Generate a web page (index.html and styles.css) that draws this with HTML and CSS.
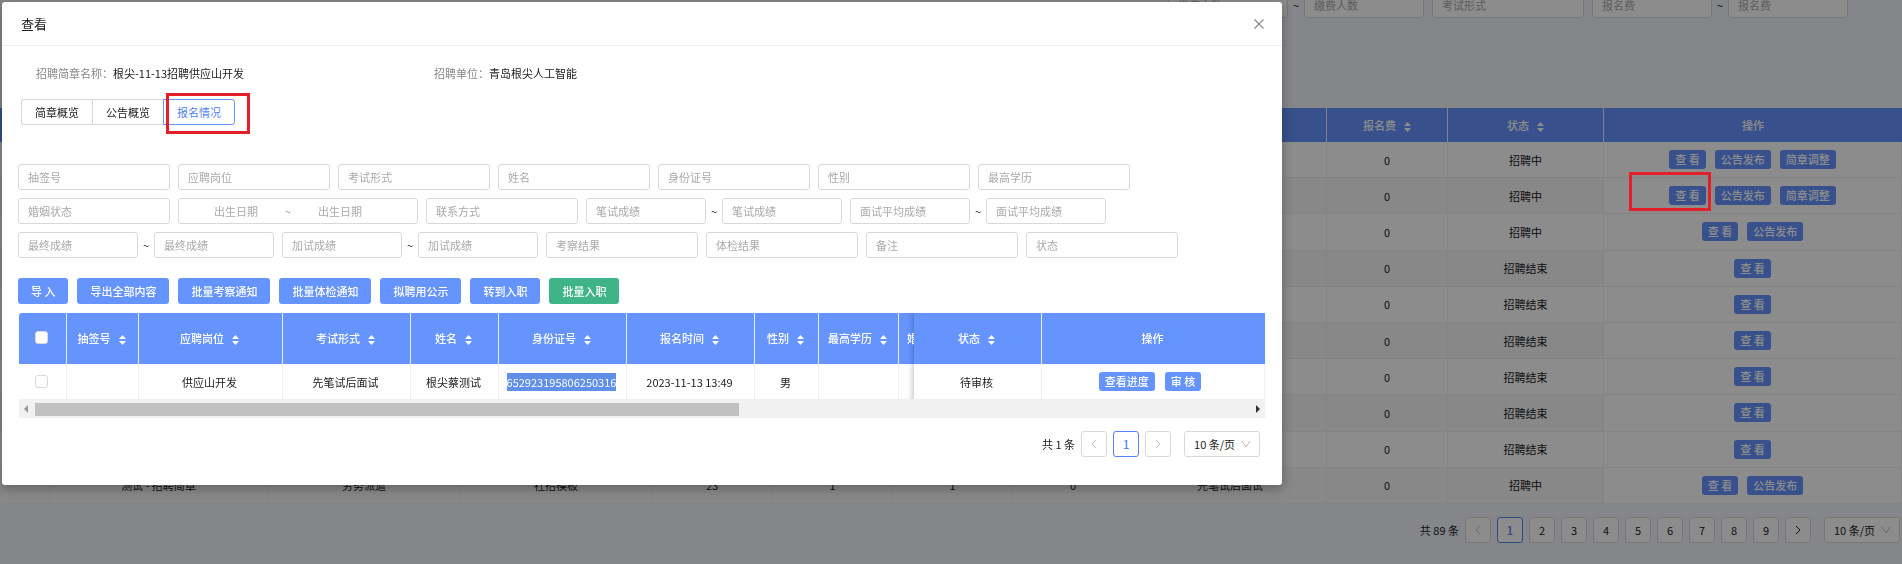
FILE: index.html
```html
<!DOCTYPE html>
<html lang="zh-CN">
<head>
<meta charset="utf-8">
<title>查看</title>
<link rel="stylesheet" href="styles.css">
</head>
<body>
<svg class="defs" aria-hidden="true">
  <symbol id="sort" viewBox="0 0 7 10"><path d="M3.5 0 7 4H0zM3.5 10 0 6h7z" fill="currentColor"/></symbol>
  <symbol id="prev" viewBox="0 0 10 10"><path d="M7 1 3 5l4 4" fill="none" stroke="currentColor"/></symbol>
  <symbol id="next" viewBox="0 0 10 10"><path d="m3 1 4 4-4 4" fill="none" stroke="currentColor"/></symbol>
  <symbol id="down" viewBox="0 0 10 10"><path d="m1 2 4 6 4-6" fill="none" stroke="currentColor"/></symbol>
</svg>

<main class="page">
  <div class="page-filters">
    <input class="field short" aria-label="缴费人数下限" placeholder="缴费人数"><span class="tilde">~</span><input class="field short" aria-label="缴费人数上限" placeholder="缴费人数">
    <input class="field after" aria-label="考试形式" placeholder="考试形式">
    <input class="field short after" aria-label="报名费下限" placeholder="报名费"><span class="tilde">~</span><input class="field short" aria-label="报名费上限" placeholder="报名费">
  </div>

  <table class="grid page-grid">
    <colgroup><col class="p1"><col class="p2"><col class="p3"><col class="p4"><col class="p5"><col class="p6"><col class="p6"><col class="p5"><col class="p3"><col class="p5"><col class="p7"><col></colgroup>
    <thead>
      <tr><th></th><th></th><th></th><th></th><th></th><th></th><th></th><th></th><th></th>
        <th>报名费<svg class="sort"><use href="#sort"/></svg></th><th>状态<svg class="sort"><use href="#sort"/></svg></th><th>操作</th></tr>
    </thead>
    <tbody>
      <tr><td></td><td></td><td></td><td></td><td></td><td></td><td></td><td></td><td></td><td>0</td><td>招聘中</td><td><div class="acts"><button class="mini">查 看</button><button class="mini">公告发布</button><button class="mini">简章调整</button></div></td></tr>
      <tr><td></td><td></td><td></td><td></td><td></td><td></td><td></td><td></td><td></td><td>0</td><td>招聘中</td><td><div class="acts"><span class="marked"><button class="mini">查 看</button><span class="mark mark-view"></span></span><button class="mini">公告发布</button><button class="mini">简章调整</button></div></td></tr>
      <tr><td></td><td></td><td></td><td></td><td></td><td></td><td></td><td></td><td></td><td>0</td><td>招聘中</td><td><div class="acts"><button class="mini">查 看</button><button class="mini">公告发布</button></div></td></tr>
      <tr><td></td><td></td><td></td><td></td><td></td><td></td><td></td><td></td><td></td><td>0</td><td>招聘结束</td><td><div class="acts"><button class="mini">查 看</button></div></td></tr>
      <tr><td></td><td></td><td></td><td></td><td></td><td></td><td></td><td></td><td></td><td>0</td><td>招聘结束</td><td><div class="acts"><button class="mini">查 看</button></div></td></tr>
      <tr><td></td><td></td><td></td><td></td><td></td><td></td><td></td><td></td><td></td><td>0</td><td>招聘结束</td><td><div class="acts"><button class="mini">查 看</button></div></td></tr>
      <tr><td></td><td></td><td></td><td></td><td></td><td></td><td></td><td></td><td></td><td>0</td><td>招聘结束</td><td><div class="acts"><button class="mini">查 看</button></div></td></tr>
      <tr><td></td><td></td><td></td><td></td><td></td><td></td><td></td><td></td><td></td><td>0</td><td>招聘结束</td><td><div class="acts"><button class="mini">查 看</button></div></td></tr>
      <tr><td></td><td></td><td></td><td></td><td></td><td></td><td></td><td></td><td></td><td>0</td><td>招聘结束</td><td><div class="acts"><button class="mini">查 看</button></div></td></tr>
      <tr><td></td><td>测试 - 招聘简章</td><td>劳务派遣</td><td>社招模板</td><td>23</td><td>1</td><td>1</td><td>0</td><td>先笔试后面试</td><td>0</td><td>招聘中</td><td><div class="acts"><button class="mini">查 看</button><button class="mini">公告发布</button></div></td></tr>
    </tbody>
  </table>

  <nav class="pager page-pager" aria-label="列表分页">
    <span>共 89 条</span>
    <button class="pg off" aria-label="上一页"><svg class="ico"><use href="#prev"/></svg></button>
    <button class="pg on">1</button><button class="pg">2</button><button class="pg">3</button><button class="pg">4</button><button class="pg">5</button><button class="pg">6</button><button class="pg">7</button><button class="pg">8</button><button class="pg">9</button>
    <button class="pg" aria-label="下一页"><svg class="ico"><use href="#next"/></svg></button>
    <span class="size"><select aria-label="每页条数"><option>10 条/页</option></select><svg class="ico"><use href="#down"/></svg></span>
  </nav>
</main>

<div class="mask"></div>

<section class="modal" role="dialog" aria-labelledby="modal-title">
  <header class="modal-head">
    <h1 id="modal-title">查看</h1>
    <button class="close" aria-label="关闭"><svg viewBox="0 0 10 10"><path d="m.5.5 9 9m0-9-9 9" fill="none" stroke="currentColor" stroke-width="1.1"/></svg></button>
  </header>
  <div class="modal-body">
    <dl class="info">
      <div><dt>招聘简章名称：</dt><dd>根尖-11-13招聘供应山开发</dd></div>
      <div><dt>招聘单位：</dt><dd>青岛根尖人工智能</dd></div>
    </dl>
    <div class="tabs">
      <button class="tab">简章概览</button><button class="tab">公告概览</button><span class="marked"><button class="tab active">报名情况</button><span class="mark mark-tab"></span></span>
    </div>

    <form class="filters">
      <div class="row">
        <input class="field" aria-label="抽签号" placeholder="抽签号">
        <input class="field after" aria-label="应聘岗位" placeholder="应聘岗位">
        <input class="field after" aria-label="考试形式" placeholder="考试形式">
        <input class="field after" aria-label="姓名" placeholder="姓名">
        <input class="field after" aria-label="身份证号" placeholder="身份证号">
        <input class="field after" aria-label="性别" placeholder="性别">
        <input class="field after" aria-label="最高学历" placeholder="最高学历">
      </div>
      <div class="row">
        <input class="field" aria-label="婚姻状态" placeholder="婚姻状态">
        <div class="field range after"><input aria-label="出生日期起" placeholder="出生日期"><span>~</span><input aria-label="出生日期止" placeholder="出生日期"></div>
        <input class="field after" aria-label="联系方式" placeholder="联系方式">
        <input class="field short after" aria-label="笔试成绩下限" placeholder="笔试成绩"><span class="tilde">~</span><input class="field short" aria-label="笔试成绩上限" placeholder="笔试成绩">
        <input class="field short after" aria-label="面试平均成绩下限" placeholder="面试平均成绩"><span class="tilde">~</span><input class="field short" aria-label="面试平均成绩上限" placeholder="面试平均成绩">
      </div>
      <div class="row">
        <input class="field short" aria-label="最终成绩下限" placeholder="最终成绩"><span class="tilde">~</span><input class="field short" aria-label="最终成绩上限" placeholder="最终成绩">
        <input class="field short after" aria-label="加试成绩下限" placeholder="加试成绩"><span class="tilde">~</span><input class="field short" aria-label="加试成绩上限" placeholder="加试成绩">
        <input class="field after" aria-label="考察结果" placeholder="考察结果">
        <input class="field after" aria-label="体检结果" placeholder="体检结果">
        <input class="field after" aria-label="备注" placeholder="备注">
        <input class="field after" aria-label="状态" placeholder="状态">
      </div>
    </form>

    <div class="tools">
      <button class="btn">导 入</button><button class="btn">导出全部内容</button><button class="btn">批量考察通知</button><button class="btn">批量体检通知</button><button class="btn">拟聘用公示</button><button class="btn">转到入职</button><button class="btn green">批量入职</button>
    </div>

    <div class="table-box">
      <table class="grid modal-grid">
        <colgroup><col class="c48"><col class="c72"><col class="c144"><col class="c128"><col class="c88"><col class="c128"><col class="c128"><col class="c64"><col class="c80"><col class="c15"><col class="c128"><col></colgroup>
        <thead>
          <tr>
            <th><input type="checkbox" class="check" aria-label="全选"></th>
            <th>抽签号<svg class="sort"><use href="#sort"/></svg></th>
            <th>应聘岗位<svg class="sort"><use href="#sort"/></svg></th>
            <th>考试形式<svg class="sort"><use href="#sort"/></svg></th>
            <th>姓名<svg class="sort"><use href="#sort"/></svg></th>
            <th>身份证号<svg class="sort"><use href="#sort"/></svg></th>
            <th>报名时间<svg class="sort"><use href="#sort"/></svg></th>
            <th>性别<svg class="sort"><use href="#sort"/></svg></th>
            <th>最高学历<svg class="sort"><use href="#sort"/></svg></th>
            <th class="cut">婚</th>
            <th>状态<svg class="sort"><use href="#sort"/></svg></th>
            <th>操作</th>
          </tr>
        </thead>
        <tbody>
          <tr>
            <td><input type="checkbox" class="check" aria-label="选择此行"></td>
            <td></td><td>供应山开发</td><td>先笔试后面试</td><td>根尖蔡测试</td>
            <td><span class="selected">652923195806250316</span></td>
            <td>2023-11-13 13:49</td><td>男</td><td></td><td class="cut"></td><td>待审核</td>
            <td><div class="acts"><button class="mini">查看进度</button><button class="mini">审 核</button></div></td>
          </tr>
        </tbody>
      </table>
      <div class="scroll">
        <svg class="arrow dim" viewBox="0 0 4 8"><path d="M4 0v8L0 4z" fill="currentColor"/></svg>
        <div class="track"><div class="thumb"></div></div>
        <svg class="arrow" viewBox="0 0 4 8"><path d="M0 0v8l4-4z" fill="currentColor"/></svg>
      </div>
    </div>

    <nav class="pager modal-pager" aria-label="报名分页">
      <span>共 1 条</span>
      <button class="pg off" aria-label="上一页"><svg class="ico"><use href="#prev"/></svg></button>
      <button class="pg on">1</button>
      <button class="pg off" aria-label="下一页"><svg class="ico"><use href="#next"/></svg></button>
      <span class="size"><select aria-label="每页条数"><option>10 条/页</option></select><svg class="ico"><use href="#down"/></svg></span>
    </nav>
  </div>
</section>
</body>
</html>
```

FILE: styles.css
```css
* { box-sizing: border-box; }

body {
  margin: 0;
  min-height: 100vh;
  overflow: hidden;
  background: #f3f5f9;
  color: #222;
  font: 11px/16px "Noto Sans CJK SC", sans-serif;
}

button, input, select { margin: 0; font: inherit; color: inherit; }
button { cursor: pointer; white-space: nowrap; }
.defs { position: absolute; width: 0; height: 0; }

/* Fields */
.field {
  width: 152px;
  height: 26px;
  padding: 0 9px;
  border: 1px solid #d9d9d9;
  border-radius: 3px;
  background: #fff;
  outline: 0;
}
.field.short { width: 120px; }
.field.after { margin-left: 8px; }
input::placeholder { color: #aaa; opacity: 1; }
.tilde { width: 16px; text-align: center; }
.field.range { display: flex; align-items: center; width: 240px; padding: 0 28px 0 8px; color: #999; }
.range input { flex: 1; min-width: 0; padding: 0; border: 0; outline: 0; text-align: center; background: none; }

/* Tables */
.grid { width: 100%; border-collapse: separate; border-spacing: 0; table-layout: fixed; text-align: center; }
.grid th { padding: 0; background: #6694ff; color: #fff; font-weight: 500; white-space: nowrap; border-right: 1px solid #e8eeff; }
.grid td { height: 36px; padding: 0; border-right: 1px solid #f0f0f0; border-bottom: 1px solid #f0f0f0; background: #fff; }
.grid th:last-child { border-right: 0; }
.sort { width: 7px; height: 10px; margin-left: 8px; vertical-align: -2px; }
.acts { display: flex; justify-content: center; gap: 9px; }
.mini { height: 19px; padding: 0 6px; border: 0; border-radius: 3px; background: #6694ff; color: #fff; line-height: 19px; font-weight: 500; }

/* Page under the dialog */
.page { margin-top: -8px; }
.page-filters { display: flex; align-items: center; justify-content: flex-end; padding-right: 54px; }
.page-grid { height: 396px; margin-top: 90px; }
.page-grid th { height: 34px; }
.page-grid tr:nth-child(even) td { background: #f7f7f7; }
.page-grid tr td:last-child { background: #fff; }
.p1 { width: 50px; } .p2 { width: 218px; } .p3 { width: 193px; } .p4 { width: 191px; }
.p5 { width: 121px; } .p6 { width: 120px; } .p7 { width: 156px; }

/* Pagination */
.pager { display: flex; align-items: center; justify-content: flex-end; gap: 6px; }
.pg { display: grid; place-items: center; width: 26px; height: 26px; padding: 0; border: 1px solid #d9d9d9; border-radius: 3px; background: #fff; }
.pg.on { border-color: #5484f0; color: #5484f0; font-weight: 500; }
.pg.off { color: #c4c4c4; }
.ico { width: 10px; height: 10px; }
.size { position: relative; margin-left: 7px; }
.size select { display: block; width: 76px; height: 26px; padding: 0 9px; border: 1px solid #d9d9d9; border-radius: 3px; background: #fff; appearance: none; }
.size .ico { position: absolute; right: 9px; top: 8px; color: #bbb; }
.page-pager { margin-top: 13px; padding-right: 2px; }
.modal-pager { margin-top: 13px; padding-right: 6px; }

/* Red annotation frames */
.marked { position: relative; display: flex; }
.mark { position: absolute; z-index: 3; border: 3px solid #e3202a; pointer-events: none; }
.mark-view { top: -14px; right: -5px; width: 82px; height: 39px; }
.mark-tab { top: -6px; right: -15px; width: 84px; height: 41px; }

.mask { position: fixed; inset: 0; z-index: 1; background: rgba(0, 0, 0, .45); pointer-events: none; }

/* Dialog */
.modal {
  position: absolute;
  z-index: 4;
  top: 2px;
  left: 2px;
  width: 67.3%;
  border-radius: 3px;
  background: #fff;
  box-shadow: 0 3px 12px rgba(0, 0, 0, .3);
}
.modal-head { display: flex; align-items: center; justify-content: space-between; height: 44px; padding: 0 18px 0 19px; border-bottom: 1px solid #eee; }
.modal-head h1 { margin: 0; font-size: 13px; font-weight: 400; }
.close { width: 10px; height: 10px; padding: 0; border: 0; background: none; color: #888; }
.close svg { display: block; width: 10px; height: 10px; }
.modal-body { padding: 19px 16px 28px; }
.info { display: flex; margin: 0; padding-left: 18px; }
.info div { display: flex; width: 398px; }
.info dt { color: #888; }
.info dd { margin: 0; }
.tabs { display: flex; margin: 18px 0 0 3px; }
.tab { height: 26px; padding: 0 13px; border: 1px solid #d9d9d9; border-right: 0; background: #fff; }
.tab:first-child { border-radius: 3px 0 0 3px; }
.tab.active { border: 1px solid #6694ff; border-radius: 0 3px 3px 0; color: #5484f0; }
.filters { display: grid; gap: 8px; margin-top: 39px; }
.row { display: flex; align-items: center; }
.tools { display: flex; gap: 9px; margin-top: 20px; }
.btn { height: 26px; padding: 0 13px; border: 0; border-radius: 3px; background: #6694ff; color: #fff; font-weight: 500; }
.btn.green { background: #3fb488; }
.table-box { margin-top: 9px; padding: 0 1px; }
.modal-grid th { height: 51px; padding: 0 2px 2px 0; }
.modal-grid td { padding-right: 2px; }
.modal-grid .acts { padding-right: 4px; gap: 10px; }
.modal-grid th:first-child { border-top-left-radius: 3px; }
.c48 { width: 48px; } .c72 { width: 72px; } .c144 { width: 144px; } .c128 { width: 128px; }
.c88 { width: 88px; } .c64 { width: 64px; } .c80 { width: 80px; } .c15 { width: 15px; }
.grid .cut { padding-left: 8px; padding-right: 0; overflow: hidden; text-align: left; border-right: 0; box-shadow: inset -6px 0 6px -5px rgba(0, 0, 0, .25); }
.check { display: block; width: 13px; height: 13px; margin: 0 auto; border: 1px solid #d9d9d9; border-radius: 3px; background: #fff; appearance: none; }
.selected { display: inline-block; background: #5f8fe8; color: #fff; line-height: 18px; }
.scroll { display: flex; align-items: center; gap: 7px; height: 18px; padding: 0 5px; background: #f1f1f1; }
.arrow { width: 4px; height: 8px; color: #333; }
.arrow.dim { color: #999; }
.track { flex: 1; }
.thumb { width: 58%; height: 13px; background: #c1c1c1; }
```
